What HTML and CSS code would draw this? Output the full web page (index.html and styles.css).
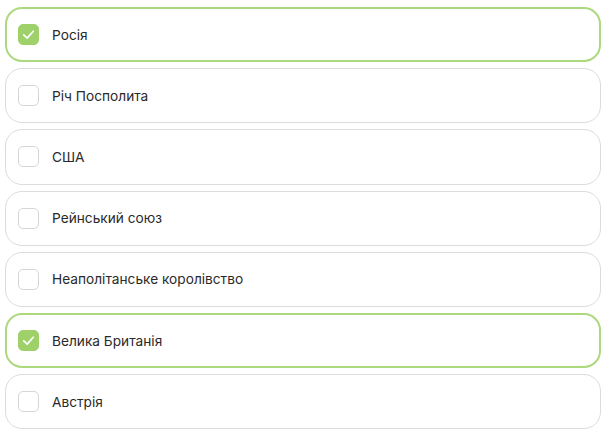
FILE: index.html
```html
<!DOCTYPE html>
<html>
<head>
<meta charset="utf-8"/>
<link rel="stylesheet" href="styles.css">
</head>
<body>

<ul class="options">
  <li class="option checked">
    <span class="box"><svg viewBox="0 0 20 20"><path d="M5 10.3 L8.6 13.8 L15 6.6"/></svg></span>
    <span class="label">Росія</span>
  </li>
  <li class="option">
    <span class="box"></span>
    <span class="label">Річ Посполита</span>
  </li>
  <li class="option">
    <span class="box"></span>
    <span class="label">США</span>
  </li>
  <li class="option">
    <span class="box"></span>
    <span class="label">Рейнський союз</span>
  </li>
  <li class="option">
    <span class="box"></span>
    <span class="label">Неаполітанське королівство</span>
  </li>
  <li class="option checked">
    <span class="box"><svg viewBox="0 0 20 20"><path d="M5 10.3 L8.6 13.8 L15 6.6"/></svg></span>
    <span class="label">Велика Британія</span>
  </li>
  <li class="option">
    <span class="box"></span>
    <span class="label">Австрія</span>
  </li>
</ul>

</body>
</html>
```

FILE: styles.css
```css
body {
  margin: 0;
  padding: 0;
  background: #fff;
  font-family: Inter, "Noto Sans", sans-serif;
}

ul.options {
  list-style: none;
  margin: 0;
  padding: 7px 11px 0 5px;
  display: flex;
  flex-direction: column;
  gap: 6px;
}

.option {
  box-sizing: border-box;
  height: 55.2px;
  border: 1px solid #dcdcdc;
  border-radius: 17px;
  display: flex;
  align-items: center;
  padding-left: 12px;
  gap: 13px;
}

.option.checked {
  border: 2px solid #acd97e;
  padding-left: 11px;
}

.box {
  box-sizing: border-box;
  width: 21px;
  height: 21px;
  border: 1px solid #d6d6d6;
  border-radius: 5px;
  display: flex;
}

.checked .box {
  background: #9ed16a;
  border-color: #9ed16a;
}

.box svg {
  width: 100%;
  height: 100%;
}

.box path {
  fill: none;
  stroke: #fff;
  stroke-width: 1.8;
  stroke-linecap: round;
  stroke-linejoin: round;
}

.label {
  font-size: 13.7px;
  color: #2a2a2a;
}
```
